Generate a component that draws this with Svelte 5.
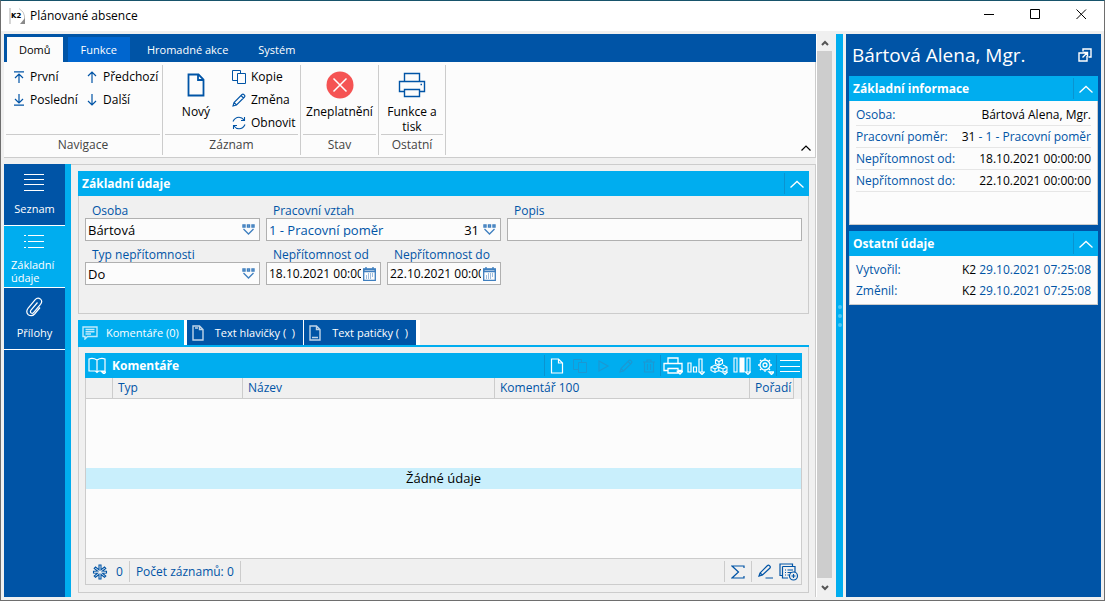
<script lang="ts">
  type Item = { icon: string; label: string };

  const ribbonTabs = ['Domů', 'Funkce', 'Hromadné akce', 'Systém'];
  let ribbonTab = $state('Domů');

  const navigation: Item[] = [
    { icon: 'first', label: 'První' },
    { icon: 'last', label: 'Poslední' },
    { icon: 'up', label: 'Předchozí' },
    { icon: 'down', label: 'Další' },
  ];

  const recordActions: Item[] = [
    { icon: 'copy', label: 'Kopie' },
    { icon: 'pencil', label: 'Změna' },
    { icon: 'refresh', label: 'Obnovit' },
  ];

  const sideItems: Item[] = [
    { icon: 'lines', label: 'Seznam' },
    { icon: 'list', label: 'Základní údaje' },
    { icon: 'clip', label: 'Přílohy' },
  ];
  let sideItem = $state('Základní údaje');

  const detailTabs: Item[] = [
    { icon: 'comment', label: 'Komentáře (0)' },
    { icon: 'header', label: 'Text hlavičky (  )' },
    { icon: 'footer', label: 'Text patičky (  )' },
  ];
  let detailTab = $state('Komentáře (0)');

  const editTools = [
    { icon: 'page', title: 'Nový', off: false },
    { icon: 'copy', title: 'Kopie', off: true },
    { icon: 'play', title: 'Spustit', off: true },
    { icon: 'pencil', title: 'Změna', off: true },
    { icon: 'trash', title: 'Smazat', off: true },
  ];
  const viewTools = [
    { icon: 'print', title: 'Tisk' },
    { icon: 'chart', title: 'Graf' },
    { icon: 'cubes', title: 'Kostka' },
    { icon: 'columns', title: 'Sloupce' },
    { icon: 'gear', title: 'Nastavení' },
  ];

  const info = [
    { label: 'Osoba:', value: 'Bártová Alena, Mgr.', extra: '' },
    { label: 'Pracovní poměr:', value: '31', extra: ' - 1 - Pracovní poměr' },
    { label: 'Nepřítomnost od:', value: '18.10.2021 00:00:00', extra: '' },
    { label: 'Nepřítomnost do:', value: '22.10.2021 00:00:00', extra: '' },
  ];
  const other = [
    { label: 'Vytvořil:', value: 'K2', extra: ' 29.10.2021 07:25:08' },
    { label: 'Změnil:', value: 'K2', extra: ' 29.10.2021 07:25:08' },
  ];

  let person = $state('Bártová');
  let relation = $state('1 - Pracovní poměr');
  let relationNo = $state('31');
  let description = $state('');
  let absenceType = $state('Do');
  let dateFrom = $state('18.10.2021 00:00:00');
  let dateTo = $state('22.10.2021 00:00:00');

  // w, h, stroke width, path
  const icons: Record<string, [number, number, number, string]> = {
    first: [12, 12, 1.2, 'M1 .8H11M6 12V3M2 7L6 3L10 7'],
    last: [12, 12, 1.2, 'M1 11.2H11M6 0V9M2 5L6 9L10 5'],
    up: [12, 12, 1.2, 'M6 12V1M2 5L6 1L10 5'],
    down: [12, 12, 1.2, 'M6 0V11M2 7L6 11L10 7'],
    copy: [14, 14, 1, 'M5 10.5H.5V.5H8.5V3M5.5 3.5H13.5V13.5H5.5Z'],
    pencil: [14, 14, 1.1, 'M1 13L2 9.5L10 1.5Q11 .6 12.2 1.8Q13.4 3 12.5 4L4.5 12ZM2 9.5L4.5 12M9 2.5L11.5 5'],
    refresh: [14, 14, 1.1, 'M1 5.5Q3 1.2 7 1.2Q10 1.2 12 4M12.5 1V4.5H9M13 8.5Q11 12.8 7 12.8Q4 12.8 2 10M1.5 13V9.5H5'],
    page: [14, 16, 1.2, 'M1.5 1H8.5L12.5 5V15H1.5ZM8.5 1V5H12.5'],
    bigPage: [18, 24, 1.8, 'M1.5 1.5H11.5L16.5 6.5V22.5H1.5ZM11 2V7H16.5'],
    bigPrint: [28, 26, 1.4, 'M6.5 9V1.5H21.5V9M6.5 19.5H1.5V9.5H26.5V19.5H21.5M6.5 17.5H21.5V24.5H6.5ZM22.5 12.5H24'],
    lines: [20, 20, 1, 'M0 1.5H20M0 6.5H20M0 11.5H20M0 17.5H20'],
    list: [20, 14, 1, 'M0 .5H2M4 .5H20M0 6.5H2M4 6.5H20M0 12.5H2M4 12.5H20'],
    clip: [18, 20, 1.2, 'M12.5 5.5L6 13Q4.7 15 6.2 16Q7.8 17 9 15.2L15.5 7.3Q18 4 15.3 1.9Q12.5 0 10 2.8L3.2 11Q.3 15 3.3 17.7Q6.8 20 9.6 17L15 10.5'],
    comment: [16, 14, 1.4, 'M1 1H15V10.5H5.5L3 13V10.5H1ZM3.5 3.5H12.5M3.5 5.7H12.5M3.5 8H9'],
    header: [12, 16, 1.4, 'M1 1H7.5L11 4.5V15H1ZM7.5 1V4.5H11M3 3H6'],
    footer: [12, 16, 1.4, 'M1 1H7.5L11 4.5V15H1ZM7.5 1V4.5H11M3 12.5H9'],
    book: [18, 17, 1.2, 'M9 3Q5 .5 1 2V14H7.5L9 15.5L10.5 14H17V2Q13 .5 9 3V15M14 15H18L16 17Z'],
    play: [14, 14, 1.2, 'M3 2L12 7L3 12Z'],
    trash: [14, 14, 1.2, 'M1 3H13M5 3V1H9V3M2.5 3V13H11.5V3M5.5 5V11M8.5 5V11'],
    print: [20, 18, 1.3, 'M5 6.5V1H15V6.5M5 13.5H1V6.5H19V13.5H15M5 11.5H15V16H5ZM14.5 14.5H19.5L17 17Z'],
    chart: [18, 18, 1.2, 'M1 6H4V15H1ZM6.5 10H9.5V15H6.5ZM12 2H15V15H12ZM12.5 15H17.5L15 17.5Z'],
    cubes: [18, 18, 1.1, 'M9 1L12.5 2.8V6.5L9 8.3L5.5 6.5V2.8ZM5.5 2.8L9 4.6L12.5 2.8M9 4.6V8M5 8L8.8 10V13.5L5 15.5L1 13.5V10ZM1 10L5 12L8.8 10M5 12V15M13 8L17 10V13.5L13 15.5L8.8 13.5V10L13 12L17 10M13 12V15M12.5 15H17.5L15 17.5Z'],
    columns: [18, 18, 1.1, 'M1 1H4V15H1ZM14 1H17V15H14ZM12.5 15H17.5L15 17.5ZM7 1H11V15H7ZM9 1V15M8 1V15M10 1V15'],
    gear: [18, 18, 1.3, 'M9 3A5 5 0 1 1 9 13A5 5 0 1 1 9 3ZM9 6A2 2 0 1 1 9 10A2 2 0 1 1 9 6ZM9 1V3M9 13V15M2 8H4M14 8H16M4 3L5.5 4.5M12.5 11.5L14 13M14 3L12.5 4.5M4 13L5.5 11.5M13 15H18L15.5 17.5Z'],
    menu: [20, 14, 1, 'M0 1.5H20M0 7.5H20M0 12.5H20'],
    chevron: [14, 8, 1.3, 'M.5 7.5L7 1.5L13.5 7.5'],
    smallUp: [10, 6, 1.2, 'M.5 5.5L5 1L9.5 5.5'],
    arrowUp: [8, 6, 2, 'M1 5L4 2L7 5'],
    arrowDown: [8, 6, 2, 'M1 1L4 4L7 1'],
    popOut: [14, 14, 1.4, 'M5 3.5V1H13V9H10.5M8 5H1V13H9V8M4.5 9.5L9.5 4.5M5.5 4.5H9.5V8.5'],
    star: [16, 16, 1.1, 'M7 1H9V5.8L12.5 3L13.8 4.5L10.5 7L14.5 7.2V9L10.5 9.2L13.8 12L12.5 13.3L9 10.5V15H7V10.5L3.5 13.3L2.2 12L5.5 9.2L1.5 9V7.2L5.5 7L2.2 4.5L3.5 3L7 5.8Z'],
    sum: [14, 14, 1.2, 'M13 3V1H1L7.5 7L1 13H13V11'],
    edit: [15, 15, 1.2, 'M1 12L2 9L9.5 1.5Q10.5 .6 11.7 1.8Q12.8 3 12 4L4.5 11ZM2 9L4.5 11M7.5 14H15'],
    addList: [20, 18, 1.2, 'M3.5 3.5H16V9M9 15H3.5V3.5M3.5 12.5H1V1H13.5V3.5M6 7H7M8.5 7H14M6 9.5H7M8.5 9.5H12M6 12H7M8.5 12H10M14.5 9A4 4 0 1 1 14.5 17A4 4 0 1 1 14.5 9ZM14.5 11V15M12.5 13H16.5'],
  };
</script>

{#snippet icon(name: string)}
  {@const [w, h, stroke, d] = icons[name]}
  <svg class="icon" width={w} height={h} viewBox="0 0 {w} {h}" fill="none" aria-hidden="true">
    <path {d} stroke="currentColor" stroke-width={stroke} />
  </svg>
{/snippet}

{#snippet lookup(title: string)}
  <button class="pick" aria-label={title}>
    <svg width="13" height="11" viewBox="0 0 13 11" fill="none">
      <path d="M1 1H3V3H1ZM5.5 1H7.5V3H5.5ZM10 1H12V3H10Z" stroke="currentColor" stroke-width="1.4" />
      <path d="M1.5 5L6.5 10L11.5 5" stroke="currentColor" stroke-width="1.3" />
    </svg>
  </button>
{/snippet}

{#snippet calendar(title: string)}
  <button class="pick" aria-label={title}>
    <svg width="13" height="14" viewBox="0 0 13 14" fill="none">
      <path d="M.7 2H12.3V13.3H.7Z" stroke="currentColor" stroke-width="1.3" />
      <path d="M.7 2.5H12.3V4.5H.7ZM3 0V3M10 0V3" stroke="currentColor" stroke-width="1.4" />
      <path d="M5 7H11M3 9H11M3 11H9" stroke="currentColor" stroke-dasharray="1 1" />
    </svg>
  </button>
{/snippet}

{#snippet infoRows(rows: typeof info)}
  {#each rows as row}
    <div class="info-row">
      <dt>{row.label}</dt>
      <dd>{row.value}<span>{row.extra}</span></dd>
    </div>
  {/each}
{/snippet}

<div class="window">
  <header class="titlebar">
    <svg class="logo" width="16" height="16" viewBox="0 0 16 16">
      <path d="M0 0H2V16H0Z" fill="#d5d5d5" />
      <path d="M10 .5Q15.5 4 15.5 8V11" fill="none" stroke="#c4c4c4" />
      <path d="M11 16L16 10V16Z" fill="#8a8a8a" />
      <text x="2" y="10" font-size="7" font-weight="900" font-family="DejaVu Sans">K2</text>
    </svg>
    <h1>Plánované absence</h1>
    <button class="win-btn" aria-label="Minimalizovat">
      <svg width="11" height="11"><path d="M0 5.5H10" stroke="#000" /></svg>
    </button>
    <button class="win-btn" aria-label="Maximalizovat">
      <svg width="11" height="11"><path d="M.5 .5H9.5V9.5H.5Z" stroke="#000" fill="none" /></svg>
    </button>
    <button class="win-btn" aria-label="Zavřít">
      <svg width="11" height="11"><path d="M.5 .5L10 10M10 .5L.5 10" stroke="#000" /></svg>
    </button>
  </header>

  <div class="body">
    <div class="left">
      <!-- Ribbon -->
      <nav class="ribbon-tabs">
        {#each ribbonTabs as tab}
          <button
            class="ribbon-tab"
            class:active={ribbonTab === tab}
            class:hot={tab === 'Funkce'}
            onclick={() => (ribbonTab = tab)}>{tab}</button>
        {/each}
      </nav>

      <div class="ribbon">
        <section class="group nav-group">
          <div class="group-body nav-grid">
            {#each navigation as item}
              <button class="small-btn">{@render icon(item.icon)}{item.label}</button>
            {/each}
          </div>
          <div class="group-name">Navigace</div>
        </section>

        <section class="group record-group">
          <div class="group-body">
            <button class="big-btn">
              <span class="big-icon">{@render icon('bigPage')}</span>Nový
            </button>
            <div class="stack">
              {#each recordActions as item}
                <button class="small-btn">{@render icon(item.icon)}{item.label}</button>
              {/each}
            </div>
          </div>
          <div class="group-name">Záznam</div>
        </section>

        <section class="group state-group">
          <div class="group-body">
            <button class="big-btn">
              <span class="big-icon">
                <svg width="28" height="28" viewBox="0 0 28 28">
                  <circle cx="14" cy="14" r="13.5" fill="#f55353" />
                  <path d="M7.5 7.5L20.5 20.5M20.5 7.5L7.5 20.5" stroke="#fff" stroke-width="1.5" />
                </svg>
              </span>Zneplatnění
            </button>
          </div>
          <div class="group-name">Stav</div>
        </section>

        <section class="group other-group">
          <div class="group-body">
            <button class="big-btn">
              <span class="big-icon">{@render icon('bigPrint')}</span>Funkce a<br />tisk
            </button>
          </div>
          <div class="group-name">Ostatní</div>
        </section>

        <button class="ribbon-toggle" aria-label="Sbalit pás karet">{@render icon('smallUp')}</button>
      </div>

      <div class="content">
        <nav class="side">
          {#each sideItems as item}
            <button
              class="side-item"
              class:active={sideItem === item.label}
              onclick={() => (sideItem = item.label)}
            >
              <span class="side-icon">{@render icon(item.icon)}</span>
              <span class="side-label">{item.label}</span>
            </button>
          {/each}
        </nav>

        <main class="main">
          <section>
            <div class="panel-head">
              <h2>Základní údaje</h2>
              <button class="collapse" aria-label="Sbalit základní údaje">{@render icon('chevron')}</button>
            </div>
            <form class="fields">
              <div class="field person">
                <label for="person">Osoba</label>
                <div class="box">
                  <input id="person" bind:value={person} />
                  {@render lookup('Vybrat osobu')}
                </div>
              </div>
              <div class="field relation">
                <label for="relation">Pracovní vztah</label>
                <div class="box">
                  <input id="relation" class="blue" bind:value={relation} />
                  <input class="number" aria-label="Číslo pracovního vztahu" bind:value={relationNo} />
                  {@render lookup('Vybrat pracovní vztah')}
                </div>
              </div>
              <div class="field description">
                <label for="description">Popis</label>
                <div class="box"><input id="description" bind:value={description} /></div>
              </div>
              <div class="field person">
                <label for="type">Typ nepřítomnosti</label>
                <div class="box">
                  <input id="type" bind:value={absenceType} />
                  {@render lookup('Vybrat typ nepřítomnosti')}
                </div>
              </div>
              <div class="field">
                <label for="from">Nepřítomnost od</label>
                <div class="box">
                  <input id="from" class="date" bind:value={dateFrom} />
                  {@render calendar('Vybrat datum od')}
                </div>
              </div>
              <div class="field">
                <label for="to">Nepřítomnost do</label>
                <div class="box">
                  <input id="to" class="date" bind:value={dateTo} />
                  {@render calendar('Vybrat datum do')}
                </div>
              </div>
            </form>
          </section>

          <div class="tabs">
            {#each detailTabs as tab}
              <button
                class="tab"
                class:active={detailTab === tab.label}
                onclick={() => (detailTab = tab.label)}>{@render icon(tab.icon)}<span>{tab.label}</span></button>
            {/each}
          </div>

          <div class="tab-page">
            <section class="grid">
              <div class="panel-head">
                <button class="tool book" aria-label="Kniha">{@render icon('book')}</button>
                <h2>Komentáře</h2>
                <div class="tools">
                  {#each editTools as tool}
                    <button class="tool" aria-label={tool.title} disabled={tool.off}>{@render icon(tool.icon)}</button>
                  {/each}
                </div>
                <div class="tools">
                  {#each viewTools as tool}
                    <button class="tool" aria-label={tool.title}>{@render icon(tool.icon)}</button>
                  {/each}
                </div>
                <div class="tools">
                  <button class="tool" aria-label="Nabídka">{@render icon('menu')}</button>
                </div>
              </div>

              <div class="table-wrap">
                <table>
                  <colgroup>
                    <col class="c-mark" />
                    <col class="c-type" />
                    <col class="c-name" />
                    <col />
                    <col class="c-order" />
                  </colgroup>
                  <thead>
                    <tr>
                      <th></th>
                      <th>Typ</th>
                      <th>Název</th>
                      <th>Komentář 100</th>
                      <th>Pořadí</th>
                    </tr>
                  </thead>
                </table>
              </div>
              <div class="empty"><p>Žádné údaje</p></div>

              <footer class="grid-foot">
                <button class="foot-btn star">{@render icon('star')}0</button>
                <span class="count">Počet záznamů: 0</span>
                <button class="foot-btn sum" aria-label="Součet">{@render icon('sum')}</button>
                <button class="foot-btn" aria-label="Upravit">{@render icon('edit')}</button>
                <button class="foot-btn" aria-label="Přidat">{@render icon('addList')}</button>
              </footer>
            </section>
          </div>
        </main>
      </div>
    </div>

    <div class="scrollbar">
      <button aria-label="Nahoru">{@render icon('arrowUp')}</button>
      <div class="thumb"></div>
      <button class="down" aria-label="Dolů">{@render icon('arrowDown')}</button>
    </div>

    <div class="splitter"><i></i><i></i><i></i></div>

    <aside class="preview">
      <div class="preview-title">
        <h2>Bártová Alena, Mgr.</h2>
        <button aria-label="Otevřít v novém okně">{@render icon('popOut')}</button>
      </div>
      <section>
        <div class="panel-head">
          <h3>Základní informace</h3>
          <button class="collapse" aria-label="Sbalit základní informace">{@render icon('chevron')}</button>
        </div>
        <dl class="lined">{@render infoRows(info)}</dl>
      </section>
      <section>
        <div class="panel-head">
          <h3>Ostatní údaje</h3>
          <button class="collapse" aria-label="Sbalit ostatní údaje">{@render icon('chevron')}</button>
        </div>
        <dl>{@render infoRows(other)}</dl>
      </section>
    </aside>
  </div>
</div>

<style>
  :global(body) {
    margin: 0;
  }

  .window {
    --blue: #0054a6;
    --cyan: #00adef;
    --gray: #f0f0f0;
    --line: #cccccc;
    --paper: #fcfcfc;
    display: flex;
    flex-direction: column;
    min-height: 100vh;
    box-sizing: border-box;
    border: 1px solid #6e6e6e;
    border-top-color: #17536b;
    background: var(--gray);
    color: #000;
    font: 12px/14px 'Open Sans', 'Noto Sans', sans-serif;
  }

  button {
    padding: 0;
    border: 0;
    background: none;
    color: inherit;
    font: inherit;
    white-space: pre;
  }

  h1, h2, h3, p, dl, dd {
    margin: 0;
  }

  .icon {
    flex: none;
    display: block;
  }

  /* Title bar */
  .titlebar {
    display: flex;
    align-items: center;
    height: 30px;
    padding-left: 8px;
    background: #fff;
  }

  .titlebar h1 {
    flex: 1;
    margin-left: 5px;
    font-size: 12px;
    font-weight: 400;
  }

  .win-btn {
    width: 46px;
    height: 30px;
  }

  .body {
    flex: 1;
    display: flex;
    padding: 3px;
  }

  .left {
    flex: 1;
    min-width: 0;
    display: flex;
    flex-direction: column;
  }

  /* Ribbon */
  .ribbon-tabs {
    display: flex;
    height: 25px;
    padding: 3px 3px 0;
    background: var(--blue);
    color: #fff;
    font-size: 11px;
  }

  .ribbon-tab {
    padding: 0 15px;
  }

  .ribbon-tab.active {
    margin-right: 5px;
    padding: 0 12px;
    background: var(--paper);
    color: #000;
  }

  .ribbon-tab.hot {
    padding: 0 13px;
    margin-right: 2px;
    background: #0066cf;
  }

  .ribbon {
    display: flex;
    height: 95px;
    border: 1px solid var(--line);
    border-width: 0 1px 1px 0;
    background: var(--paper);
  }

  .group {
    display: flex;
    flex-direction: column;
    box-sizing: border-box;
    margin: 3px 0 2px;
    padding: 0 2px;
    border-right: 1px solid var(--line);
  }

  .nav-group {
    width: 159px;
  }

  .record-group {
    width: 138px;
  }

  .state-group {
    width: 78px;
  }

  .other-group {
    width: 67px;
  }

  .group-body {
    flex: 1;
    display: flex;
    justify-content: center;
    border-bottom: 1px solid var(--line);
  }

  .group-name {
    height: 20px;
    line-height: 20px;
    text-align: center;
    color: #444;
  }

  .nav-grid {
    display: grid;
    grid-template: 23px 23px / 73px auto;
    grid-auto-flow: column;
    justify-content: start;
    padding-left: 7px;
  }

  .small-btn {
    display: flex;
    align-items: center;
    gap: 5px;
    height: 23px;
  }

  .small-btn .icon,
  .big-icon .icon {
    color: var(--blue);
  }

  .record-group .big-btn {
    width: 62px;
  }

  .stack {
    flex: 1;
    padding-left: 5px;
  }

  .big-btn {
    display: flex;
    flex-direction: column;
    align-items: center;
    align-self: flex-start;
    line-height: 15px;
  }

  .big-icon {
    display: flex;
    align-items: center;
    justify-content: center;
    height: 39px;
  }

  .ribbon-toggle {
    align-self: flex-end;
    margin: 0 4px 6px auto;
  }

  /* Side navigation */
  .content {
    flex: 1;
    display: flex;
    margin-top: 6px;
  }

  .side {
    width: 61px;
    border-right: 6px solid var(--cyan);
    background: var(--blue);
  }

  .side-item {
    display: flex;
    flex-direction: column;
    align-items: center;
    width: 100%;
    height: 62px;
    border-bottom: 1px solid #fff;
    color: #fff;
    font-size: 11px;
    line-height: 13px;
    white-space: normal;
  }

  .side-item.active {
    background: var(--cyan);
    text-align: left;
  }

  .side-icon {
    display: flex;
    align-items: center;
    height: 38px;
    padding-right: 1px;
  }

  .side-item.active .side-icon {
    height: 32px;
  }

  .side-label {
    padding: 0 7px;
  }

  /* Form */
  .main {
    flex: 1;
    min-width: 0;
    display: flex;
    flex-direction: column;
    padding: 6px 6px 4px 7px;
    border: 1px solid var(--line);
    border-width: 1px 1px 0 0;
  }

  .panel-head {
    display: flex;
    align-items: center;
    height: 25px;
    background: var(--cyan);
    color: #fff;
  }

  .panel-head h2,
  .panel-head h3 {
    flex: 1;
    padding-left: 4px;
    font-size: 12px;
    line-height: 16px;
    font-weight: 700;
  }

  .collapse {
    display: flex;
    align-items: center;
    justify-content: center;
    width: 25px;
    height: 21px;
    border-left: 1px solid #0a93d0;
  }

  .fields {
    display: grid;
    grid-template-columns: 175fr 115fr 114fr 295fr;
    align-content: start;
    gap: 6px;
    min-height: 110px;
    padding: 7px 6px 0;
    border: 1px solid var(--line);
    border-top: 0;
  }

  .person {
    grid-column: 1;
  }

  .relation {
    grid-column: 2 / 4;
  }

  .field {
    min-width: 0;
  }

  .field label {
    display: block;
    padding-left: 7px;
    line-height: 15px;
    color: var(--blue);
  }

  .box {
    display: flex;
    align-items: center;
    height: 21px;
    padding-right: 4px;
    border: 1px solid #b0b0b0;
    background: var(--paper);
  }

  .box input {
    flex: 1;
    min-width: 0;
    padding: 0 2px;
    border: 0;
    outline: 0;
    background: none;
    font: inherit;
    font-size: 13px;
  }

  .box input.date {
    padding-right: 0;
    font-size: 12px;
  }

  .box input.blue {
    color: var(--blue);
  }

  .box input.number {
    flex: none;
    width: 40px;
    text-align: right;
  }

  .pick {
    display: flex;
    margin-left: 2px;
    color: #3f7fbf;
  }

  /* Detail tabs */
  .tabs {
    display: flex;
    height: 25px;
    margin-top: 6px;
    border-bottom: 2px solid var(--cyan);
    color: #fff;
    font-size: 11px;
  }

  .tab {
    display: flex;
    align-items: center;
    padding: 0 8px 0 5px;
    border-right: 1px solid #fff;
    background: var(--blue);
  }

  .tab span {
    margin-left: 11px;
  }

  .tab .icon {
    opacity: 0.75;
  }

  .tab.active {
    padding: 0 5px 0 4px;
    border-right-width: 3px;
    background: var(--cyan);
  }

  .tab.active span {
    margin-left: 8px;
  }

  .tab:last-child {
    border-right-width: 4px;
  }

  .tab-page {
    flex: 1;
    display: flex;
    padding: 6px 6px 7px;
    border: 1px solid var(--line);
    border-top: 0;
  }

  .grid {
    flex: 1;
    display: flex;
    flex-direction: column;
    min-width: 0;
  }

  .tools {
    display: flex;
    height: 21px;
    border-left: 1px solid #0a93d0;
  }

  .tool {
    display: flex;
    align-items: center;
    justify-content: center;
    width: 23px;
  }

  .tools:last-child .tool {
    width: 25px;
  }

  .tool:disabled {
    color: #1b98d3;
  }

  .table-wrap {
    padding-right: 7px;
    border: 1px solid var(--line);
    border-width: 0 1px;
  }

  table {
    width: 100%;
    table-layout: fixed;
    border-spacing: 0;
    color: var(--blue);
  }

  .c-mark {
    width: 27px;
  }

  .c-type {
    width: 130px;
  }

  .c-name {
    width: 252px;
  }

  .c-order {
    width: 44px;
  }

  th {
    height: 20px;
    padding: 0 0 0 5px;
    border-right: 1px solid var(--line);
    border-bottom: 1px solid var(--line);
    font-weight: 400;
    line-height: 20px;
    text-align: left;
    white-space: nowrap;
  }

  .empty {
    flex: 1;
    display: flex;
    align-items: center;
    border: 1px solid var(--line);
    border-width: 0 1px;
    background: var(--paper);
  }

  .empty p {
    flex: 1;
    background: #c9effc;
    font-size: 13px;
    line-height: 21px;
    text-align: center;
  }

  .grid-foot {
    display: flex;
    align-items: center;
    height: 25px;
    border: 1px solid var(--line);
    color: var(--blue);
  }

  .foot-btn {
    display: flex;
    align-items: center;
    height: 21px;
    margin-right: 6px;
  }

  .foot-btn:last-child {
    margin-right: 2px;
  }

  .star {
    gap: 8px;
    margin: 0;
    padding: 0 6px;
    border-right: 1px solid var(--line);
  }

  .count {
    margin-right: auto;
    padding: 0 6px;
    border-right: 1px solid var(--line);
    line-height: 21px;
  }

  .sum {
    padding: 0 6px;
    border: 1px solid var(--line);
    border-width: 0 1px;
  }

  /* Scroll bar and splitter */
  .scrollbar {
    display: flex;
    flex-direction: column;
    width: 15px;
    margin-right: 4px;
    border-left: 1px solid #fff;
    color: #555;
  }

  .scrollbar button {
    display: flex;
    align-items: center;
    justify-content: center;
    height: 17px;
  }

  .scrollbar button.down {
    height: 19px;
  }

  .thumb {
    flex: 1;
    background: #cdcdcd;
  }

  .splitter {
    display: flex;
    flex-direction: column;
    align-items: center;
    justify-content: center;
    gap: 5px;
    width: 7px;
    margin-right: 3px;
    background: var(--cyan);
  }

  .splitter i {
    width: 4px;
    height: 4px;
    border-radius: 50%;
    background: #4cc6f5;
  }

  /* Preview */
  .preview {
    width: 249px;
    padding: 0 3px;
    background: var(--blue);
  }

  .preview-title {
    display: flex;
    align-items: center;
    height: 42px;
    padding: 0 6px 0 3px;
    color: #fff;
  }

  .preview-title h2 {
    flex: 1;
    font-size: 19px;
    line-height: 26px;
    font-weight: 400;
  }

  dl {
    margin-bottom: 6px;
    padding: 3px 6px;
    border: 1px solid var(--line);
    border-top: 0;
    background: var(--paper);
  }

  dl.lined {
    min-height: 117px;
  }

  .info-row {
    display: flex;
    justify-content: space-between;
    line-height: 21px;
  }

  .lined .info-row {
    border-bottom: 1px solid #e6e6e6;
  }

  dt,
  dd span {
    color: var(--blue);
  }

  dd {
    white-space: pre;
  }
</style>
